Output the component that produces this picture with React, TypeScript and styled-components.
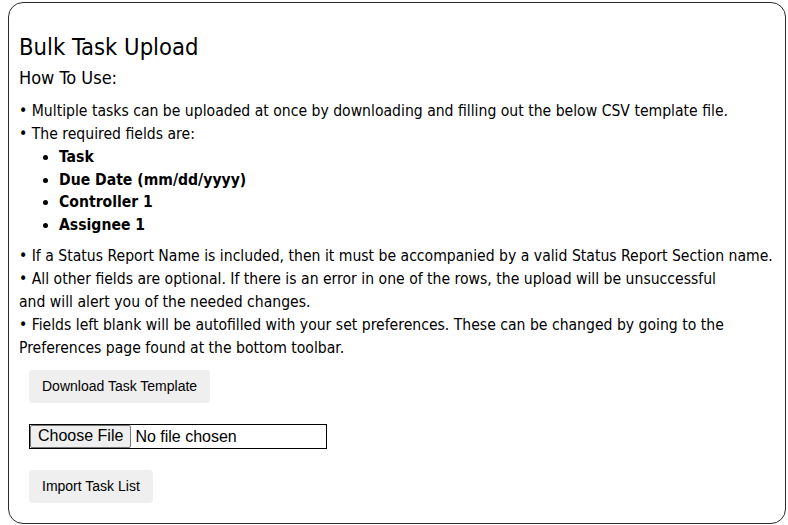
import React from "react";
import styled, { createGlobalStyle } from "styled-components";

const GlobalStyle = createGlobalStyle`
  html, body {
    margin: 0;
    padding: 0;
    background: #ffffff;
  }
  body {
    font-family: "DejaVu Sans Condensed", "DejaVu Sans", sans-serif;
    color: #000;
  }
`;

const requiredFields = [
  "Task",
  "Due Date (mm/dd/yyyy)",
  "Controller 1",
  "Assignee 1",
];

const BulkUpload: React.FC = () => {
  return (
    <Card>
      <Title>Bulk Task Upload</Title>
      <Subtitle>How To Use:</Subtitle>
      <Instructions>
        <Line>
          • Multiple tasks can be uploaded at once by downloading and filling
          out the below CSV template file.
        </Line>
        <Line>• The required fields are:</Line>
        <FieldList>
          {requiredFields.map((field) => (
            <li key={field}>{field}</li>
          ))}
        </FieldList>
        <Line>
          • If a Status Report Name is included, then it must be accompanied by
          a valid Status Report Section name.
        </Line>
        <Line>
          • All other fields are optional. If there is an error in one of the
          rows, the upload will be unsuccessful
          <br />
          and will alert you of the needed changes.
        </Line>
        <Line>
          • Fields left blank will be autofilled with your set preferences.
          These can be changed by going to the
          <br />
          Preferences page found at the bottom toolbar.
        </Line>
      </Instructions>
      <Actions>
        <ActionButton type="button">Download Task Template</ActionButton>
        <FileInput type="file" accept=".csv" />
        <ActionButton type="button">Import Task List</ActionButton>
      </Actions>
    </Card>
  );
};

const Card = styled.div`
  box-sizing: border-box;
  width: 778px;
  margin: 2px 0 0 8px;
  padding: 29px 10px 20px 10px;
  border: 1px solid #2b2b2b;
  border-radius: 15px;
`;

const Title = styled.h2`
  margin: 0 0 4px 0;
  font-size: 23.6px;
  line-height: 30px;
  font-weight: normal;
`;

const Subtitle = styled.h3`
  margin: 0 0 10px 0;
  font-size: 18px;
  line-height: 24px;
  font-weight: normal;
`;

const Instructions = styled.div`
  font-size: 15.6px;
  line-height: 23px;
`;

const Line = styled.div`
  white-space: nowrap;
`;

const FieldList = styled.ul`
  margin: 0 0 8px 0;
  padding-left: 40px;
  list-style: disc;
  font-weight: bold;

  li {
    line-height: 22.7px;
  }
`;

const Actions = styled.div`
  display: flex;
  flex-direction: column;
  align-items: flex-start;
  gap: 21px;
  margin-top: 10px;
  padding-left: 10px;
`;

const ActionButton = styled.button`
  box-sizing: border-box;
  height: 33px;
  padding: 0 13px;
  border: none;
  border-radius: 4px;
  background-color: #efefef;
  color: #000;
  font-family: "Liberation Sans", Arial, sans-serif;
  font-size: 14px;
  line-height: 17px;
  cursor: pointer;
`;

const FileInput = styled.input`
  box-sizing: border-box;
  width: 298px;
  height: 25px;
  border: 1px solid #000;
  font-family: "Liberation Sans", Arial, sans-serif;
  font-size: 16px;
  color: #000;
  padding: 0;

  &::file-selector-button {
    height: 100%;
    margin: 0 4px 0 0;
    padding: 0 7px;
    border: 1px solid #767676;
    border-radius: 2px;
    background-color: #efefef;
    color: #000;
    font-family: inherit;
    font-size: 16px;
  }
`;

export default function App() {
  return (
    <>
      <GlobalStyle />
      <BulkUpload />
    </>
  );
}
